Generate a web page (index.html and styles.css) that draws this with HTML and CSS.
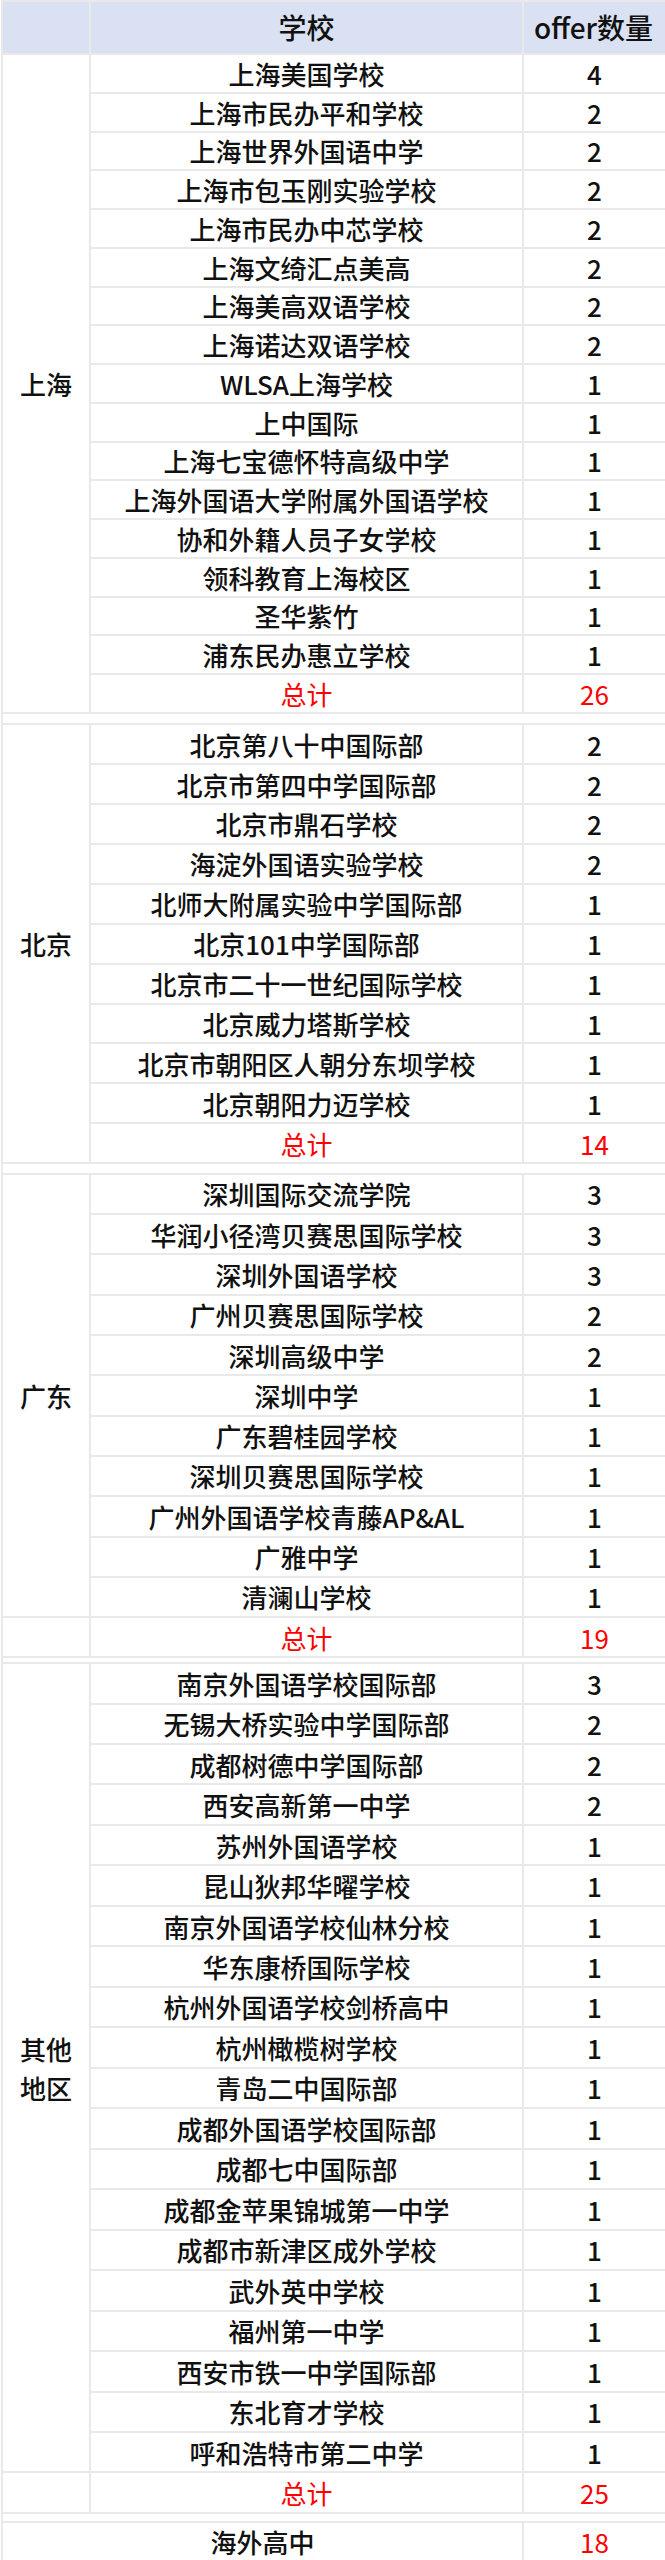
FILE: index.html
```html
<!DOCTYPE html>
<html lang="zh-CN">
<head>
<meta charset="utf-8">
<title>offer数量</title>
<link rel="stylesheet" href="styles.css">
</head>
<body>
<table class="sheet">
  <colgroup>
    <col class="c-region">
    <col class="c-school">
    <col class="c-num">
  </colgroup>
  <thead>
    <tr class="head">
      <th></th>
      <th>学校</th>
      <th class="num-head">offer数量</th>
    </tr>
  </thead>
  <tbody class="g-sh">
    <tr><td class="region" rowspan="17">上海</td><td>上海美国学校</td><td>4</td></tr>
    <tr><td>上海市民办平和学校</td><td>2</td></tr>
    <tr><td>上海世界外国语中学</td><td>2</td></tr>
    <tr><td>上海市包玉刚实验学校</td><td>2</td></tr>
    <tr><td>上海市民办中芯学校</td><td>2</td></tr>
    <tr><td>上海文绮汇点美高</td><td>2</td></tr>
    <tr><td>上海美高双语学校</td><td>2</td></tr>
    <tr><td>上海诺达双语学校</td><td>2</td></tr>
    <tr><td>WLSA上海学校</td><td>1</td></tr>
    <tr><td>上中国际</td><td>1</td></tr>
    <tr><td>上海七宝德怀特高级中学</td><td>1</td></tr>
    <tr><td>上海外国语大学附属外国语学校</td><td>1</td></tr>
    <tr><td>协和外籍人员子女学校</td><td>1</td></tr>
    <tr><td>领科教育上海校区</td><td>1</td></tr>
    <tr><td>圣华紫竹</td><td>1</td></tr>
    <tr><td>浦东民办惠立学校</td><td>1</td></tr>
    <tr class="total"><td>总计</td><td>26</td></tr>
  </tbody>
  <tbody class="gap gap-1"><tr><td colspan="3"></td></tr></tbody>
  <tbody class="g-bj">
    <tr><td class="region" rowspan="11">北京</td><td>北京第八十中国际部</td><td>2</td></tr>
    <tr><td>北京市第四中学国际部</td><td>2</td></tr>
    <tr><td>北京市鼎石学校</td><td>2</td></tr>
    <tr><td>海淀外国语实验学校</td><td>2</td></tr>
    <tr><td>北师大附属实验中学国际部</td><td>1</td></tr>
    <tr><td>北京101中学国际部</td><td>1</td></tr>
    <tr><td>北京市二十一世纪国际学校</td><td>1</td></tr>
    <tr><td>北京威力塔斯学校</td><td>1</td></tr>
    <tr><td>北京市朝阳区人朝分东坝学校</td><td>1</td></tr>
    <tr><td>北京朝阳力迈学校</td><td>1</td></tr>
    <tr class="total"><td>总计</td><td>14</td></tr>
  </tbody>
  <tbody class="gap gap-2"><tr><td colspan="3"></td></tr></tbody>
  <tbody class="g-gd">
    <tr><td class="region" rowspan="11">广东</td><td>深圳国际交流学院</td><td>3</td></tr>
    <tr><td>华润小径湾贝赛思国际学校</td><td>3</td></tr>
    <tr><td>深圳外国语学校</td><td>3</td></tr>
    <tr><td>广州贝赛思国际学校</td><td>2</td></tr>
    <tr><td>深圳高级中学</td><td>2</td></tr>
    <tr><td>深圳中学</td><td>1</td></tr>
    <tr><td>广东碧桂园学校</td><td>1</td></tr>
    <tr><td>深圳贝赛思国际学校</td><td>1</td></tr>
    <tr><td>广州外国语学校青藤AP&amp;AL</td><td>1</td></tr>
    <tr><td>广雅中学</td><td>1</td></tr>
    <tr><td>清澜山学校</td><td>1</td></tr>
    <tr class="total"><td></td><td>总计</td><td>19</td></tr>
  </tbody>
  <tbody class="gap gap-3"><tr><td colspan="3"></td></tr></tbody>
  <tbody class="g-ot">
    <tr><td class="region" rowspan="20">其他地区</td><td>南京外国语学校国际部</td><td>3</td></tr>
    <tr><td>无锡大桥实验中学国际部</td><td>2</td></tr>
    <tr><td>成都树德中学国际部</td><td>2</td></tr>
    <tr><td>西安高新第一中学</td><td>2</td></tr>
    <tr><td>苏州外国语学校</td><td>1</td></tr>
    <tr><td>昆山狄邦华曜学校</td><td>1</td></tr>
    <tr><td>南京外国语学校仙林分校</td><td>1</td></tr>
    <tr><td>华东康桥国际学校</td><td>1</td></tr>
    <tr><td>杭州外国语学校剑桥高中</td><td>1</td></tr>
    <tr><td>杭州橄榄树学校</td><td>1</td></tr>
    <tr><td>青岛二中国际部</td><td>1</td></tr>
    <tr><td>成都外国语学校国际部</td><td>1</td></tr>
    <tr><td>成都七中国际部</td><td>1</td></tr>
    <tr><td>成都金苹果锦城第一中学</td><td>1</td></tr>
    <tr><td>成都市新津区成外学校</td><td>1</td></tr>
    <tr><td>武外英中学校</td><td>1</td></tr>
    <tr><td>福州第一中学</td><td>1</td></tr>
    <tr><td>西安市铁一中学国际部</td><td>1</td></tr>
    <tr><td>东北育才学校</td><td>1</td></tr>
    <tr><td>呼和浩特市第二中学</td><td>1</td></tr>
    <tr class="total"><td></td><td>总计</td><td>25</td></tr>
  </tbody>
  <tbody class="gap gap-4"><tr><td colspan="3"></td></tr></tbody>
  <tbody class="g-abroad">
    <tr><td colspan="2">海外高中</td><td class="red">18</td></tr>
  </tbody>
</table>
</body>
</html>
```
FILE: styles.css
```css
html, body {
  margin: 0;
  padding: 0;
  background: #ffffff;
}

body {
  font-family: "Noto Sans CJK SC", "Noto Sans", sans-serif;
  font-size: 26px;
  font-weight: 500;
  color: #111111;
  overflow: hidden;
}

.sheet {
  border-collapse: collapse;
  table-layout: fixed;
  width: 668px;
  margin-left: 1px;
}

.c-region { width: 88px; }
.c-school { width: 433px; }
.c-num { width: 147px; }

.sheet th,
.sheet td {
  border: 2px solid #e9e9e9;
  padding: 0;
  text-align: center;
  vertical-align: middle;
  line-height: 1.2;
  white-space: nowrap;
}

.sheet .head th {
  background: #d9e1f2;
  font-size: 28px;
  font-weight: 500;
  height: 51px;
}

.sheet .num-head {
  padding-right: 6px;
}

.sheet td:last-child {
  padding-right: 4px;
}

.sheet .region {
  white-space: normal;
  line-height: 39px;
  padding: 0 8px;
}

.sheet .total td,
.sheet .red {
  color: #ff0000;
  font-weight: 400;
}

.g-sh tr { height: 38.75px; }
.g-bj tr { height: 39.9px; }
.g-gd tr { height: 40.3px; }
.g-ot tr { height: 40.48px; }
.g-abroad tr { height: 38.3px; }

.gap td { padding: 0; }
.gap-1 tr { height: 11.6px; }
.gap-2 tr { height: 10.7px; }
.gap-3 tr { height: 5.7px; }
.gap-4 tr { height: 9.3px; }
```
